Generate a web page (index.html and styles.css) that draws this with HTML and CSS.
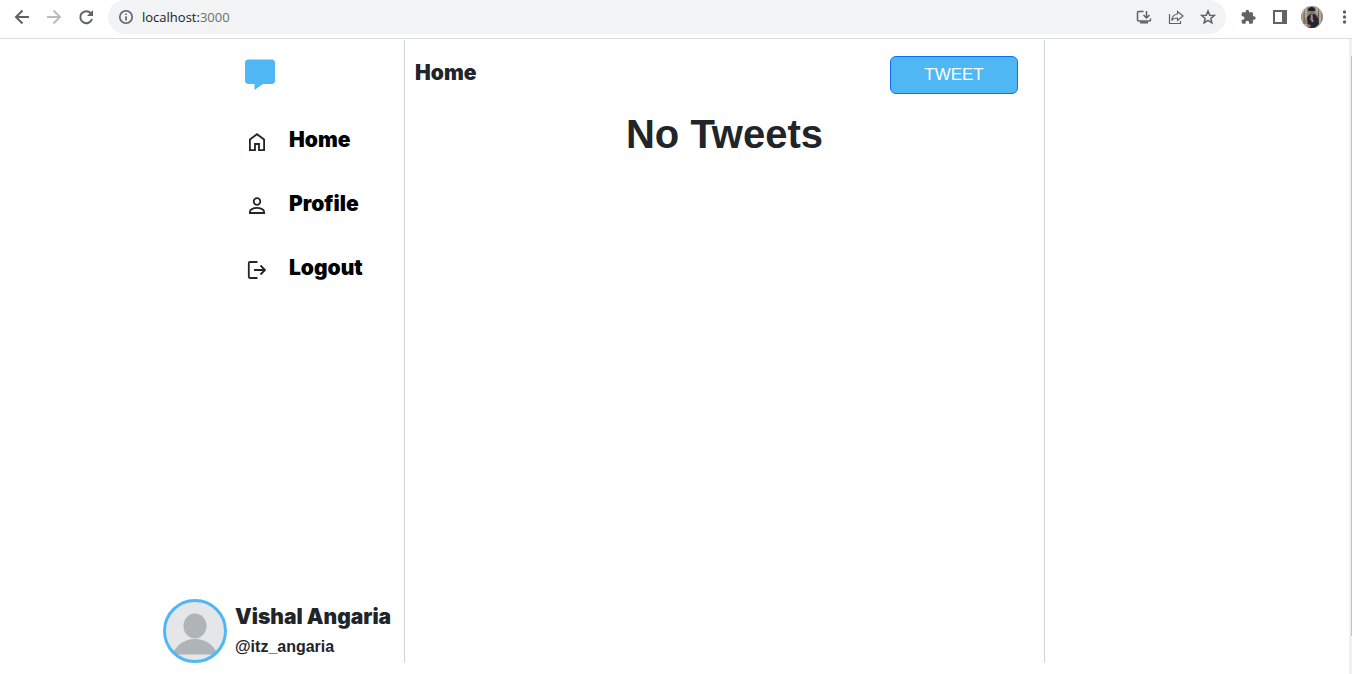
FILE: index.html
```html
<!DOCTYPE html>
<html lang="en">
<head>
<meta charset="utf-8">
<meta name="viewport" content="width=device-width, initial-scale=1">
<title>Home</title>
<link rel="stylesheet" href="styles.css">
</head>
<body>
<header class="browser">
  <button class="tool" aria-label="Back"><svg width="16" height="16" viewBox="0 0 16 16" fill="none" stroke="#5f6368" stroke-width="2"><path d="M15 8H2M8.500 1.500 2 8l6.500 6.500"/></svg></button>
  <button class="tool" aria-label="Forward"><svg width="16" height="16" viewBox="0 0 16 16" fill="none" stroke="#babcbe" stroke-width="2"><path d="M1 8h13M7.500 1.500 14 8l-6.500 6.500"/></svg></button>
  <button class="tool" aria-label="Reload"><svg width="16" height="16" viewBox="0 0 16 16"><path d="M12.800 4.200A6 6 0 1 0 14 10" fill="none" stroke="#5f6368" stroke-width="2"/><path d="M15 1v6H9z" fill="#5f6368"/></svg></button>
  <div class="address">
    <svg width="16" height="16" viewBox="0 0 16 16" fill="none" stroke="#5f6368" stroke-width="1.600"><circle cx="8" cy="8" r="6.200"/><path d="M8 7.200v4.200M8 4.400v1.600"/></svg>
    <span class="url">localhost:<span class="port">3000</span></span>
    <button class="tool" aria-label="Install app"><svg width="16" height="16" viewBox="0 0 16 16" fill="none" stroke="#5f6368" stroke-width="1.500"><path d="M7.500 2.500H2.500q-1 0-1 1v7.500q0 1 1 1h11q1 0 1-1V9.500M10.500 2v6.500M7.500 6l3 3 3-3"/><path d="M4 13.500h8" stroke-width="2"/></svg></button>
    <button class="tool" aria-label="Share"><svg width="16" height="16" viewBox="0 0 16 16" fill="none" stroke="#5f6368" stroke-width="1.200"><path d="M1.500 5v9.500h11V12M9.500 2.500 15 7l-5.500 4.500V9C7 9 5 9.700 3.800 11.500 4.200 7.500 6.200 5.300 9.500 5z"/></svg></button>
    <button class="tool" aria-label="Bookmark"><svg width="16" height="16" viewBox="0 0 16 16" fill="none" stroke="#5f6368" stroke-width="1.500"><path d="m8 2 1.700 4.200 4.500.3-3.400 2.900 1.100 4.400L8 11.400l-3.900 2.400 1.100-4.400-3.400-2.900 4.500-.3z"/></svg></button>
  </div>
  <button class="tool" aria-label="Extensions"><svg width="16" height="16" viewBox="0 0 24 24" fill="#5f6368"><path d="M21 11h-1.500V7a2 2 0 0 0-2-2h-4V3.500a2.500 2.500 0 0 0-5 0V5h-4a2 2 0 0 0-2 2v3.800H4a2.700 2.700 0 0 1 0 5.400H2.500V20a2 2 0 0 0 2 2h3.800v-1.500a2.700 2.700 0 0 1 5.400 0V22h3.800a2 2 0 0 0 2-2v-4H21a2.500 2.500 0 0 0 0-5z"/></svg></button>
  <button class="tool" aria-label="Side panel"><svg width="16" height="16" viewBox="0 0 16 16"><path d="M1 1h14v14H1zM3 3v10h7V3z" fill="#5f6368" fill-rule="evenodd"/></svg></button>
  <button class="tool tool-photo" aria-label="Account"><svg width="22" height="22" viewBox="0 0 22 22"><clipPath id="photo"><circle cx="11" cy="11" r="11"/></clipPath><g clip-path="url(#photo)"><path d="M0 0h22v22H0z" fill="#918679"/><path d="M2 3v15M5 1v11M16 0v8M19 4v14" stroke="#c2b6a5" stroke-width="1.500"/><path d="M3 7v13M17.500 5v12" stroke="#665e51"/><path d="M0 18h22v4H0z" fill="#b4b0a9"/><path d="m6 11 3-3h5l3 4 1 6-4 4H7z" fill="#202630"/><path d="M9 3h4v5l-2 1-2-1z" fill="#8f6d5e"/><path d="M7 3q4-4 7 0v2H7z" fill="#172430"/><path d="M9.500 9h2l1 7h-2z" fill="#8194ad"/><path d="M9 12h3v2H9zM6 18l4 1-1 2H6z" fill="#d95855"/></g></svg></button>
  <button class="tool" aria-label="Menu"><svg width="16" height="16" viewBox="0 0 16 16" fill="#5f6368"><circle cx="8.500" cy="3" r="1.700"/><circle cx="8.500" cy="8" r="1.700"/><circle cx="8.500" cy="13" r="1.700"/></svg></button>
</header>
<div class="viewport">
  <div class="page">
    <aside class="sidebar">
      <nav class="menu" aria-label="Main">
        <a class="brand" href="#" aria-label="Tweets"><svg width="32" height="32" viewBox="0 0 32 32" fill="#50b7f5"><path d="M4.500 .5h23q3.500 0 3.500 3.500v17.500q0 3.500-3.500 3.500H19l-8.500 6V25h-6Q1 25 1 21.500V4Q1 .5 4.500 .5z"/></svg></a>
        <a class="item" href="#"><svg width="20" height="20" viewBox="0 0 20 20" fill="none" stroke="#212529" stroke-width="1.800"><path d="M2.900 7.500 10 2.200l7.100 5.300v10.600H12V12H8v6.100H2.900z"/></svg>Home</a>
        <a class="item" href="#"><svg width="20" height="20" viewBox="0 0 20 20" fill="none" stroke="#212529" stroke-width="1.800"><circle cx="10" cy="5.500" r="3.300"/><path d="M2.900 17v-1.300c0-2.600 4.300-3.800 7.100-3.800s7.100 1.200 7.100 3.800V17z"/></svg>Profile</a>
        <a class="item" href="#"><svg width="20" height="20" viewBox="0 0 20 20" fill="none" stroke="#212529" stroke-width="1.800"><path d="M10.500 2H3q-1.200 0-1.200 1.200v13.600Q1.800 18 3 18h7.500M7 10h11M13.500 5.500 18 10l-4.500 4.500"/></svg>Logout</a>
      </nav>
      <div class="account">
        <svg class="avatar" width="64" height="64" viewBox="0 0 64 64"><clipPath id="face"><circle cx="32" cy="32" r="30"/></clipPath><circle cx="32" cy="32" r="31" fill="#e4e6e7"/><g fill="#aeb4b7" clip-path="url(#face)"><ellipse cx="32" cy="27" rx="11.500" ry="12.500"/><path d="M9 55.500C14 45 22 40 32 40s18 5 23 15.500z"/></g><circle cx="32" cy="32" r="30.500" fill="none" stroke="#50b7f5" stroke-width="3"/></svg>
        <div class="who">
          <div class="name">Vishal Angaria</div>
          <div class="handle">@itz_angaria</div>
        </div>
      </div>
    </aside>
    <main class="feed">
      <div class="feed-head">
        <h2 class="title">Home</h2>
        <button class="tweet">TWEET</button>
      </div>
      <h1 class="empty">No Tweets</h1>
    </main>
  </div>
  <div class="scroll" aria-hidden="true"><div class="thumb"></div></div>
</div>
</body>
</html>
```
FILE: styles.css
```css
* {
  box-sizing: border-box;
}

body {
  display: flex;
  flex-direction: column;
  min-height: 100vh;
  margin: 0;
  background: #fff;
  color: #212529;
  font-family: "Liberation Sans", Arial, sans-serif;
}

button {
  margin: 0;
  font-family: inherit;
}

svg {
  display: block;
  flex: none;
}

.browser {
  display: flex;
  align-items: flex-start;
  gap: 16px;
  padding-left: 14px;
  height: 39px;
  overflow: hidden;
  border-bottom: 1px solid #dadce0;
}

.tool {
  display: flex;
  flex: none;
  align-items: center;
  justify-content: center;
  width: 16px;
  height: 34px;
  padding: 0;
  border: 0;
  background: none;
}

.address {
  display: flex;
  flex: 1;
  align-items: center;
  gap: 16px;
  height: 34px;
  margin: 0 -2px;
  padding: 0 10px;
  border-radius: 17px;
  background: #f1f3f4;
}

.url {
  flex: 1;
  margin-left: -8px;
  color: #202124;
  font: 13px "Open Sans", sans-serif;
}

.port {
  color: #6b6f73;
}

.tool-photo {
  width: 22px;
  margin: 0 -3px;
}

.viewport {
  display: flex;
  flex: 1;
}

.page {
  display: grid;
  flex: 1;
  grid-template-columns: 404fr 641fr 304fr;
  padding: 1px 0 11px;
}

.sidebar {
  display: flex;
  flex-direction: column;
  align-items: flex-end;
  justify-content: space-between;
}

.menu {
  display: flex;
  flex-direction: column;
  width: 168px;
  padding-top: 19px;
}

.brand {
  align-self: flex-start;
  margin: 0 0 32px 8px;
}

.item {
  display: flex;
  align-items: center;
  gap: 22px;
  height: 32px;
  margin-bottom: 32px;
  padding: 2px 0 0 11px;
  color: #000;
  text-decoration: none;
}

.item svg {
  margin-top: 4px;
}

.item,
.title,
.name {
  font-family: Inter, "Liberation Sans", sans-serif;
  font-size: 21px;
  font-weight: 900;
  line-height: 26px;
}

.account {
  display: flex;
  gap: 8px;
  padding-right: 8px;
}

.who {
  min-width: 161px;
  padding-top: 5px;
}

.handle {
  margin-top: 7px;
  font-size: 16px;
  font-weight: 700;
  line-height: 20px;
}

.feed {
  border: solid #d3d4d5;
  border-width: 0 1px;
  padding: 16px 26px 0 10px;
}

.feed-head {
  display: flex;
  justify-content: space-between;
}

.title {
  margin: 4px 0 0;
}

.tweet {
  width: 128px;
  height: 38px;
  padding: 0 0 1px;
  border: 1px solid #0d6efd;
  border-radius: 6px;
  background: #50b7f5;
  color: #fff;
  font-size: 17px;
}

.empty {
  margin: 16px 0 0;
  padding-left: 16px;
  text-align: center;
  font-size: 40px;
  line-height: 48px;
}

.scroll {
  width: 3px;
  padding: 17px 0 38px 2px;
  display: flex;
  background: #f1f1f1;
}

.thumb {
  flex: 1;
  background: #c1c1c1;
}
```
